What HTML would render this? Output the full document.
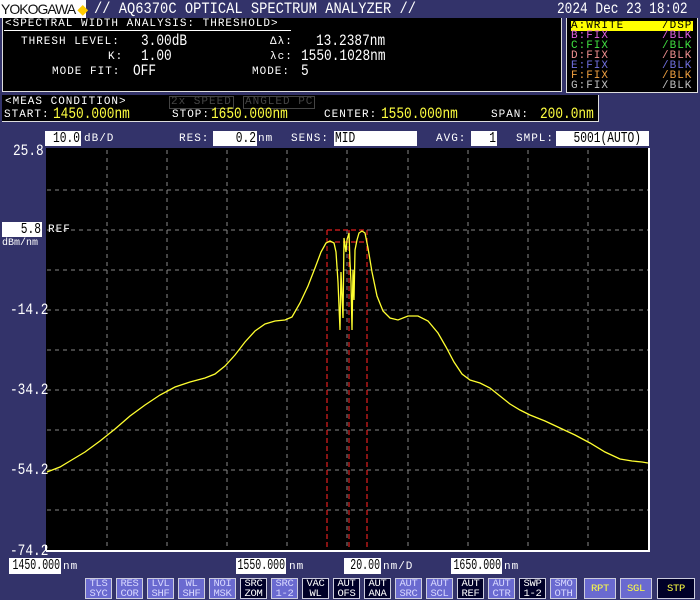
<!DOCTYPE html>
<html><head><meta charset="utf-8"><style>
*{margin:0;padding:0;box-sizing:border-box}
body{width:700px;height:600px;background:#33336a;position:relative;overflow:hidden;font-family:"Liberation Mono","DejaVu Sans Mono",monospace;color:#fff}
.a{position:absolute;white-space:pre;line-height:1}
.blk{position:absolute;background:#000}
.box{position:absolute;background:#fff;color:#000;font-size:15px;line-height:16px;white-space:pre}
.box span{position:absolute;right:1px;top:0;transform:scaleX(0.75);transform-origin:right center}
.box.l span{left:1px;right:auto;transform-origin:left center}
.box.w span{transform:scaleX(0.66)}
.s{font-size:11px;letter-spacing:1px}
.n{font-size:16px;transform:scaleX(0.8);transform-origin:left top}
.y{color:#ffff40}
.b{position:absolute;top:578px;width:27px;height:21px;font-size:10.5px;line-height:10px;text-align:center;border:1px solid #ccd;letter-spacing:-0.3px}
.L{background:#6a6ad0;color:#d8d8ff}
.D{background:#000028;color:#fff}
</style></head><body>
<div class="a" style="left:0;top:0;width:86px;height:18px;background:#fff;color:#111;font-family:'Liberation Sans',sans-serif;font-size:14px;padding:2px 0 0 1px;letter-spacing:-1px">YOKOGAWA <span style="color:#ffcc00">◆</span></div>
<div class="a" style="left:94px;top:1px;font-size:16px;transform:scaleX(0.86);transform-origin:left top">// AQ6370C OPTICAL SPECTRUM ANALYZER //</div>
<div class="a" style="left:557px;top:1px;font-size:16px;transform:scaleX(0.8);transform-origin:left top">2024 Dec 23 18:02</div>

<div class="blk" style="left:2px;top:18px;width:560px;height:74px;border:1px solid #ddd;border-top:none"></div>
<div class="a s" style="left:5px;top:19px">&lt;SPECTRAL WIDTH ANALYSIS: THRESHOLD&gt;</div>
<div style="position:absolute;left:4px;top:30px;width:287px;height:1px;background:#fff"></div>
<div class="a s" style="left:21px;top:37px">THRESH LEVEL:</div>
<div class="a n" style="left:141px;top:33px">3.00dB</div>
<div class="a s" style="left:108px;top:52px">K:</div>
<div class="a n" style="left:141px;top:48px">1.00</div>
<div class="a s" style="left:52px;top:67px">MODE FIT:</div>
<div class="a n" style="left:133px;top:63px">OFF</div>
<div class="a s" style="left:270px;top:37px">Δλ:</div>
<div class="a n" style="left:316px;top:33px">13.2387nm</div>
<div class="a s" style="left:270px;top:52px">λc:</div>
<div class="a n" style="left:301px;top:48px">1550.1028nm</div>
<div class="a s" style="left:252px;top:67px">MODE:</div>
<div class="a n" style="left:301px;top:63px">5</div>

<div class="blk" style="left:566px;top:18px;width:132px;height:75px;border:1px solid #ddd;border-top:none"></div>
<div class="a s" style="left:571px;top:21px;width:122px;height:10px;background:#ffff00;color:#000">A:WRITE</div>
<div class="a s" style="left:662px;top:21px;color:#000">/DSP</div>
<div class="a s" style="left:571px;top:31px;color:#e060e0">B:FIX</div><div class="a s" style="left:662px;top:31px;color:#e060e0">/BLK</div>
<div class="a s" style="left:571px;top:41px;color:#40e040">C:FIX</div><div class="a s" style="left:662px;top:41px;color:#40e040">/BLK</div>
<div class="a s" style="left:571px;top:51px;color:#f09090">D:FIX</div><div class="a s" style="left:662px;top:51px;color:#f09090">/BLK</div>
<div class="a s" style="left:571px;top:61px;color:#7070e0">E:FIX</div><div class="a s" style="left:662px;top:61px;color:#7070e0">/BLK</div>
<div class="a s" style="left:571px;top:71px;color:#f0a040">F:FIX</div><div class="a s" style="left:662px;top:71px;color:#f0a040">/BLK</div>
<div class="a s" style="left:571px;top:81px;color:#c0c0c0">G:FIX</div><div class="a s" style="left:662px;top:81px;color:#c0c0c0">/BLK</div>

<div class="blk" style="left:2px;top:95px;width:597px;height:27px;border:1px solid #ddd;border-top:none;border-left:none"></div>
<div class="a s" style="left:5px;top:97px">&lt;MEAS CONDITION&gt;</div>
<div class="a s" style="left:169px;top:96px;color:#444;border:1px solid #444;padding:0 1px">2x SPEED</div>
<div class="a s" style="left:243px;top:96px;color:#444;border:1px solid #444;padding:0 1px">ANGLED PC</div>
<div class="a s" style="left:4px;top:110px">START:</div><div class="a n y" style="left:53px;top:106px">1450.000nm</div>
<div class="a s" style="left:172px;top:110px">STOP:</div><div class="a n y" style="left:211px;top:106px">1650.000nm</div>
<div class="a s" style="left:324px;top:110px">CENTER:</div><div class="a n y" style="left:381px;top:106px">1550.000nm</div>
<div class="a s" style="left:491px;top:110px">SPAN:</div><div class="a n y" style="left:540px;top:106px">200.0nm</div>
<div style="position:absolute;left:2px;top:121px;width:597px;height:1px;background:#ddd"></div>

<div class="box" style="left:45px;top:131px;width:36px;height:15px"><span>10.0</span></div>
<div class="a s" style="left:84px;top:134px">dB/D</div>
<div class="a s" style="left:179px;top:134px">RES:</div>
<div class="box" style="left:213px;top:131px;width:44px;height:15px"><span>0.2</span></div>
<div class="a s" style="left:258px;top:134px">nm</div>
<div class="a s" style="left:291px;top:134px">SENS:</div>
<div class="box l" style="left:334px;top:131px;width:83px;height:15px"><span>MID</span></div>
<div class="a s" style="left:436px;top:134px">AVG:</div>
<div class="box" style="left:471px;top:131px;width:26px;height:15px"><span>1</span></div>
<div class="a s" style="left:516px;top:134px">SMPL:</div>
<div class="box" style="left:556px;top:131px;width:93px;height:15px"><span style="right:8px">5001(AUTO)</span></div>

<svg style="position:absolute;left:0;top:0" width="700" height="600">
<rect x="46" y="148" width="603" height="403" fill="#000"/>
<g stroke="#888" stroke-width="1" stroke-dasharray="4,4">
<line x1="107" y1="150" x2="107" y2="550"/><line x1="167" y1="150" x2="167" y2="550"/><line x1="227" y1="150" x2="227" y2="550"/><line x1="287" y1="150" x2="287" y2="550"/><line x1="347" y1="150" x2="347" y2="550"/><line x1="408" y1="150" x2="408" y2="550"/><line x1="468" y1="150" x2="468" y2="550"/><line x1="528" y1="150" x2="528" y2="550"/><line x1="588" y1="150" x2="588" y2="550"/>
<line x1="47" y1="190" x2="648" y2="190"/><line x1="47" y1="230" x2="648" y2="230"/><line x1="47" y1="270" x2="648" y2="270"/><line x1="47" y1="310" x2="648" y2="310"/><line x1="47" y1="350" x2="648" y2="350"/><line x1="47" y1="390" x2="648" y2="390"/><line x1="47" y1="430" x2="648" y2="430"/><line x1="47" y1="470" x2="648" y2="470"/><line x1="47" y1="510" x2="648" y2="510"/>
</g>
<line x1="649" y1="148" x2="649" y2="551" stroke="#fff" stroke-width="2"/>
<line x1="46" y1="551" x2="650" y2="551" stroke="#fff" stroke-width="2"/>
<line x1="46" y1="545" x2="46" y2="551" stroke="#fff" stroke-width="2"/>
<g stroke="#e02020" stroke-width="1.2" stroke-dasharray="5,3" fill="none">
<line x1="327" y1="230" x2="327" y2="550"/><line x1="367" y1="230" x2="367" y2="550"/><line x1="349" y1="230" x2="349" y2="550"/>
<line x1="327" y1="230" x2="367" y2="230"/><line x1="327" y1="242" x2="367" y2="242"/>
</g>
<polyline fill="none" stroke="#ffff30" stroke-width="1.3" points="47,472 60,467 70,461 85,452 100,441 115,429 130,416 145,405 160,395 175,387 190,382 205,378 215,374 225,366 235,355 245,342 255,331 265,324 275,321 285,320 292,317 300,303 308,286 315,268 321,252 326,243 330,241 334,243 336,252 338,282 340,330 341,272 343,318 344,238 346,252 347,240 349,233 350,262 351,282 352,330 353,270 354,300 355,250 357,240 359,233 362,231 365,233 368,248 372,272 377,296 383,311 390,318 398,320 408,316 418,316 428,321 438,333 446,347 454,362 462,374 470,380 480,383 490,388 500,396 510,404 520,410 530,415 545,421 560,428 575,435 590,443 605,452 620,459 632,461 642,462 648,463"/>
</svg>
<div class="a n" style="left:13px;top:143px">25.8</div>
<div class="a n" style="left:10px;top:302px">-14.2</div>
<div class="a n" style="left:10px;top:382px">-34.2</div>
<div class="a n" style="left:10px;top:462px">-54.2</div>
<div class="a n" style="left:10px;top:543px">-74.2</div>
<div class="box" style="left:2px;top:222px;width:40px;height:15px"><span>5.8</span></div>
<div class="a s" style="left:48px;top:225px">REF</div>
<div class="a" style="left:2px;top:239px;font-size:10px">dBm/nm</div>

<div class="box w" style="left:9px;top:558px;width:52px;height:16px"><span>1450.000</span></div><div class="a s" style="left:63px;top:562px">nm</div>
<div class="box w" style="left:236px;top:558px;width:50px;height:16px"><span>1550.000</span></div><div class="a s" style="left:289px;top:562px">nm</div>
<div class="box w" style="left:344px;top:558px;width:37px;height:16px"><span>20.00</span></div><div class="a s" style="left:383px;top:562px">nm/D</div>
<div class="box w" style="left:451px;top:558px;width:51px;height:16px"><span>1650.000</span></div><div class="a s" style="left:504px;top:562px">nm</div>

<div class="b L" style="left:85px">TLS<br>SYC</div>
<div class="b L" style="left:116px">RES<br>COR</div>
<div class="b L" style="left:147px">LVL<br>SHF</div>
<div class="b L" style="left:178px">WL<br>SHF</div>
<div class="b L" style="left:209px">NOI<br>MSK</div>
<div class="b D" style="left:240px">SRC<br>ZOM</div>
<div class="b L" style="left:271px">SRC<br>1-2</div>
<div class="b D" style="left:302px">VAC<br>WL</div>
<div class="b D" style="left:333px">AUT<br>OFS</div>
<div class="b D" style="left:364px">AUT<br>ANA</div>
<div class="b L" style="left:395px">AUT<br>SRC</div>
<div class="b L" style="left:426px">AUT<br>SCL</div>
<div class="b D" style="left:457px">AUT<br>REF</div>
<div class="b L" style="left:488px">AUT<br>CTR</div>
<div class="b D" style="left:519px">SWP<br>1-2</div>
<div class="b L" style="left:550px">SMO<br>OTH</div>
<div class="b L" style="left:584px;width:32px;color:#ffff40;line-height:20px">RPT</div>
<div class="b L" style="left:620px;width:32px;color:#ffff40;line-height:20px">SGL</div>
<div class="b D" style="left:657px;width:38px;color:#ffff40;line-height:20px">STP</div>
</body></html>
